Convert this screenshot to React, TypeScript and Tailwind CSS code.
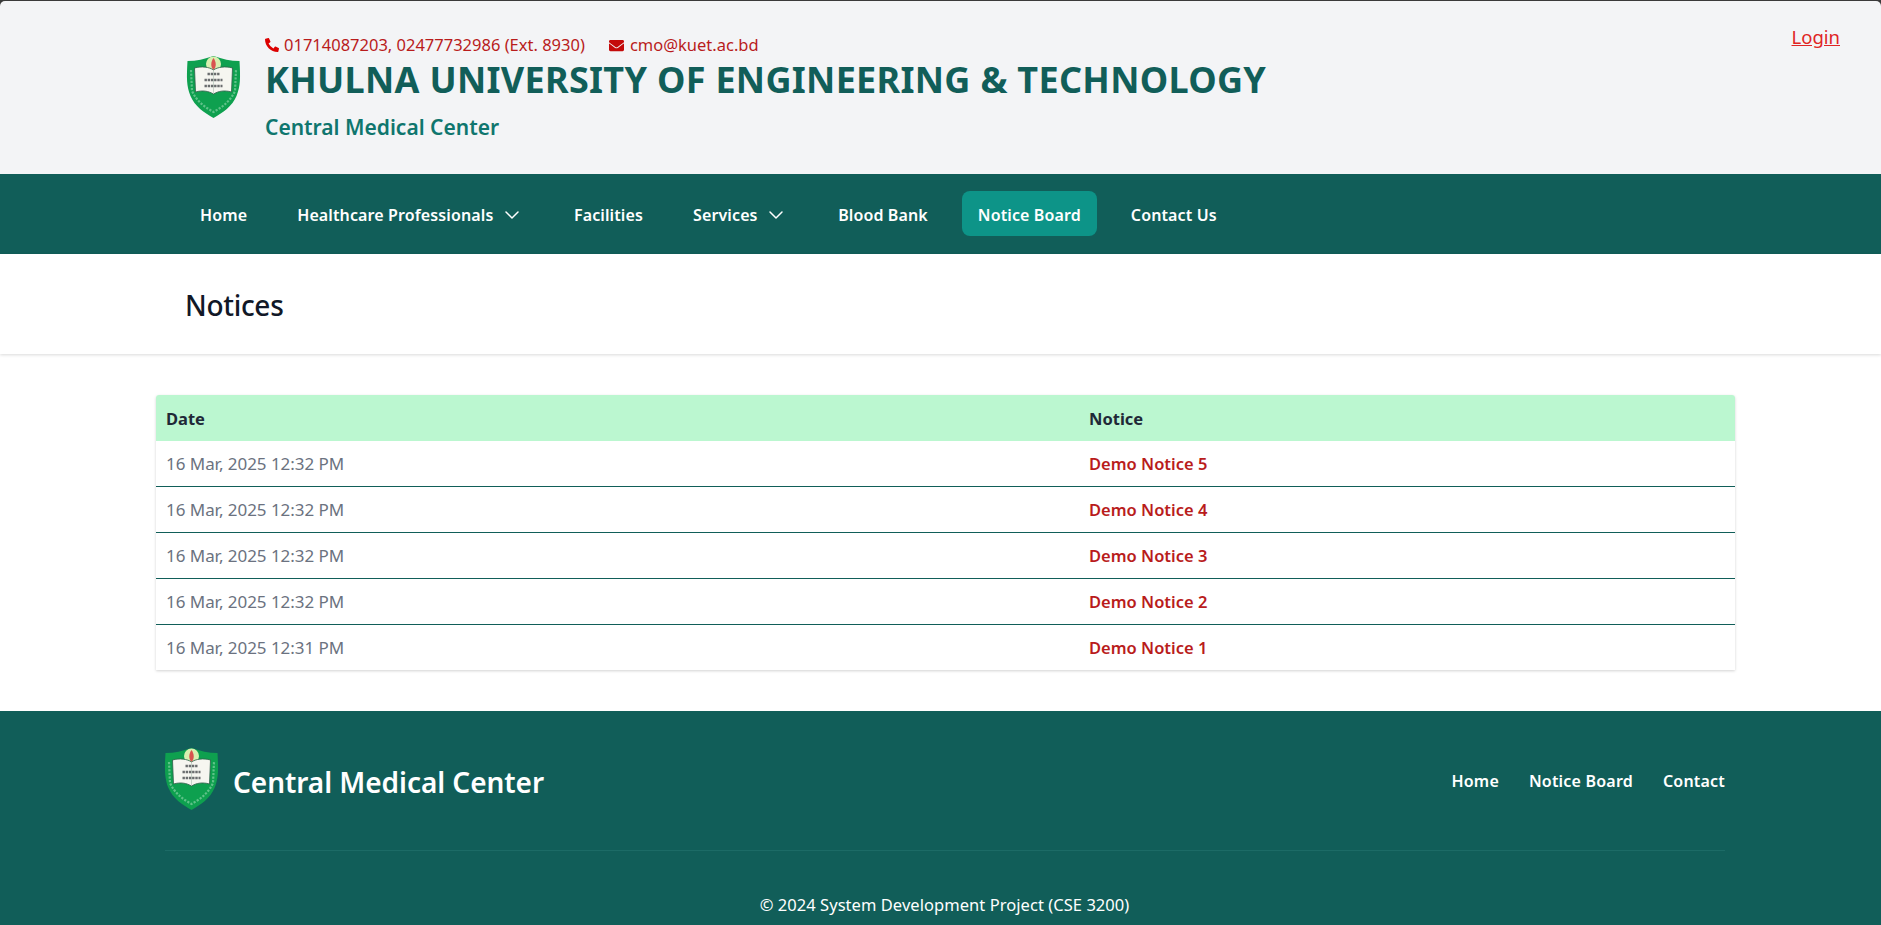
import { ChevronDown } from "lucide-react";
import { FaPhoneAlt, FaEnvelope } from "react-icons/fa";

const notices = [
  { date: "16 Mar, 2025 12:32 PM", title: "Demo Notice 5" },
  { date: "16 Mar, 2025 12:32 PM", title: "Demo Notice 4" },
  { date: "16 Mar, 2025 12:32 PM", title: "Demo Notice 3" },
  { date: "16 Mar, 2025 12:32 PM", title: "Demo Notice 2" },
  { date: "16 Mar, 2025 12:31 PM", title: "Demo Notice 1" },
];

function Logo({ className }: { className: string }) {
  return (
    <svg viewBox="0 0 54 62" className={className}>
      <path d="M1 5 C10 5 18 3 27 0 C36 3 44 5 53 5 C54 22 54 30 50 40 C46 50 36 57 27 62 C18 57 8 50 4 40 C0 30 0 22 1 5 Z" fill="#0ea04f" />
      <circle cx="27" cy="8" r="7.5" fill="#d9efb0" />
      <path d="M27 2 C30 6 30 11 27 14 C24 11 24 6 27 2 Z" fill="#d9534f" />
      <path d="M8 12 C15 10 23 11 27 14 C31 11 39 10 46 12 L45 36 C38 34 32 35 27 38 C22 35 16 34 9 36 Z" fill="#f6f6f0" stroke="#2f5d47" strokeWidth="0.8" />
      <path d="M27 14 V38" stroke="#a9bdb0" strokeWidth="0.6" />
      <path d="M21 18 H33 M18 24 H36 M18 30 H36" stroke="#6a6d6e" strokeWidth="2.4" strokeDasharray="2.4 0.8" />
      <path d="M4.5 14 L5.5 35 C10 45 18 51 27 56 C36 51 44 45 48.5 35 L49.5 14" fill="none" stroke="#c4ebd0" strokeOpacity="0.45" strokeWidth="2.2" strokeDasharray="2.2 1.4" />
    </svg>
  );
}

function NavItem({ label, chevron, active }: { label: string; chevron?: boolean; active?: boolean }) {
  return (
    <a className={`flex items-center h-[45px] pt-[2px] px-4 rounded-lg text-[16px] tracking-[0.12px] font-semibold text-white ${active ? "bg-[#0d9488]" : ""}`}>
      {label}
      {chevron && <ChevronDown className="w-6 h-6 ml-[6.5px]" strokeWidth={1.5} />}
    </a>
  );
}

export default function App() {
  return (
    <div className="min-h-[925px] bg-[#3a3a3a] pt-[1px] font-['Noto_Sans',sans-serif]">
      <header className="h-[173px] bg-[#f3f4f6] rounded-t-[5px] flex justify-between pl-[186px] pr-[41px]">
        <div className="flex items-start gap-[24px] pt-[32px]">
          <Logo className="w-[55px] h-[62px] mt-[23px]" />
          <div>
            <div className="flex items-center gap-6 text-[16.5px] leading-[24px] text-[#b91c1c]">
              <span className="flex items-center gap-[5px]">
                <FaPhoneAlt className="w-[14px] h-[14px] text-[#dc0000]" />
                01714087203, 02477732986 (Ext. 8930)
              </span>
              <span className="flex items-center gap-[6px]">
                <FaEnvelope className="w-[15px] h-[15px] text-[#c40a0a]" />
                cmo@kuet.ac.bd
              </span>
            </div>
            <h1 className="text-[36px] leading-[40px] tracking-[0.3px] font-bold text-[#115e59] mt-[3px] whitespace-nowrap">
              KHULNA UNIVERSITY OF ENGINEERING &amp; TECHNOLOGY
            </h1>
            <p className="text-[21px] leading-[28px] font-semibold text-[#0f766e] mt-[13px]">Central Medical Center</p>
          </div>
        </div>
        <a className="text-[18.5px] leading-[28px] text-[#e02424] underline mt-[22px]">Login</a>
      </header>

      <nav className="h-[80px] bg-[#115e59] flex items-center gap-[18px] pl-[184px] pb-[1px]">
        <NavItem label="Home" />
        <NavItem label="Healthcare Professionals" chevron />
        <NavItem label="Facilities" />
        <NavItem label="Services" chevron />
        <NavItem label="Blood Bank" />
        <NavItem label="Notice Board" active />
        <NavItem label="Contact Us" />
      </nav>

      <section className="relative z-10 h-[100px] bg-white flex items-center pl-[185px] pt-[2px] shadow-[0_1px_3px_rgba(0,0,0,0.15)]">
        <h2 className="text-[28px] font-medium tracking-[-0.3px] text-[#111827]">Notices</h2>
      </section>

      <main className="bg-white pt-[41px] pb-[41px] pl-[156px] pr-[146px]">
        <div className="rounded-t-[3px] shadow-[0_1px_3px_rgba(0,0,0,0.18)]">
          <div className="grid grid-cols-[923px_1fr] h-[46px] pt-[2px] items-center rounded-t-[3px] bg-[#bbf7d0] px-[10px] text-[16.5px] font-bold text-[#1f2937]">
            <span>Date</span>
            <span>Notice</span>
          </div>
          {notices.map((n, i) => (
            <div
              key={n.title}
              className={`grid grid-cols-[923px_1fr] items-center pt-[1px] px-[10px] text-[17px] bg-white ${i < notices.length - 1 ? "h-[46px] border-b border-[#115e59]" : "h-[45px]"}`}
            >
              <span className="text-[#6b7280] tracking-[-0.04px]">{n.date}</span>
              <span className="text-[16.5px] font-semibold text-[#b91c1c]">{n.title}</span>
            </div>
          ))}
        </div>
      </main>

      <footer className="h-[214px] bg-[#115e59] text-white pl-[164px] pr-[156px]">
        <div className="flex items-center justify-between h-[140px] ml-[1px] border-b border-[#1c6b66]">
          <div className="flex items-center gap-[14px] -mt-[2px]">
            <Logo className="w-[55px] h-[62px] -ml-[1px] -mt-[1px]" />
            <span className="text-[28px] font-semibold tracking-[-0.05px] pt-[4px]">Central Medical Center</span>
          </div>
          <div className="flex items-center gap-[30px] text-[16px] tracking-[0.2px] font-semibold">
            <a>Home</a>
            <a>Notice Board</a>
            <a>Contact</a>
          </div>
        </div>
        <p className="text-center text-[16.5px] tracking-[0.05px] mt-[42px]">© 2024 System Development Project (CSE 3200)</p>
      </footer>
    </div>
  );
}
